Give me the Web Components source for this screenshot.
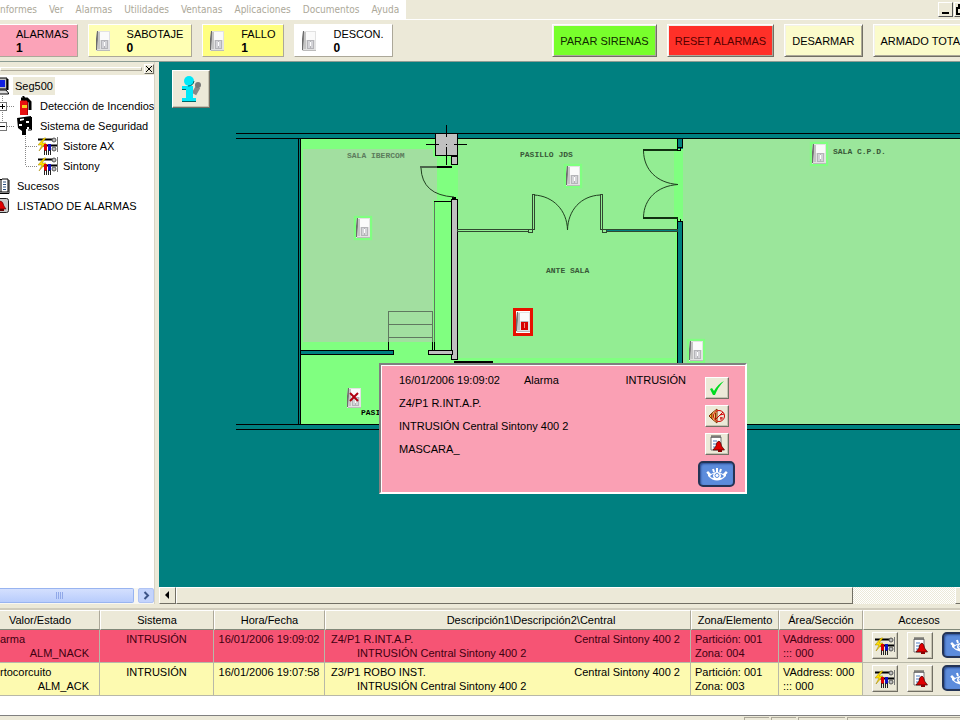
<!DOCTYPE html>
<html lang="es">
<head>
<meta charset="utf-8">
<title>Seg500</title>
<style>
    html, body {
        margin: 0;
        height: 100%;
        overflow: hidden;
    }
    body {
        font: 11px/14px "Liberation Sans", Arial, sans-serif;
        color: #000;
        background: #ece9d8;
    }
</style>
</head>
<body>
<seg-app></seg-app>

<script>
const ICONS = {
    pir: `<svg width="14" height="20" viewBox="0 0 14 20">
        <path d="M1 0H14V20H0V8Z" fill="#e2e2e2"/><path d="M1 0H2V9L1 19H0V8Z" fill="#6c6c6c"/>
        <path d="M2 1H4V18H1.500Z" fill="#c4c4c4"/><path d="M4 1H13V9H4Z" fill="#fafafa"/>
        <path d="M5 9H12V18H5Z" fill="#b4b4b8"/><path d="M6 10H8V17H6ZM9 10H11V17H9Z" fill="#d4d4d8"/>
        <path d="M8 11H9V15H8Z" fill="#fff"/><path d="M1 19.500H14" stroke="#bbb"/></svg>`,
    computer: `<svg width="17" height="18" viewBox="0 0 17 18">
        <path d="M2 1H15V12H2Z" fill="#c0c0c0" stroke="#000"/><path d="M4 3H13V10H4Z" fill="#1020e0"/>
        <path d="M1 13H14L16.500 16V17H1Z" fill="#ddd" stroke="#000"/><path d="M15.500 2V13" stroke="#000" stroke-width="2"/></svg>`,
    extinguisher: `<svg width="18" height="20" viewBox="0 0 18 20">
        <path d="M4 5H12V19H4Z" fill="#e81010"/><path d="M4 5Q8 1 12 5V6H4Z" fill="#e81010"/>
        <path d="M6 9H11V12H6Z" fill="#f8d020"/><path d="M11.500 5V19" stroke="#a00" />
        <path d="M5 3H11L14 6V14" fill="none" stroke="#000" stroke-width="3"/><path d="M7 0L9 4" stroke="#000" stroke-width="2"/></svg>`,
    camera: `<svg width="18" height="20" viewBox="0 0 18 20">
        <path d="M1 2L15 0V13H10V19H6V15L2 12Z" fill="#000"/><path d="M4 3L8 2.500V4L4 5Z" fill="#fff"/>
        <path d="M3 8H6V10H3ZM10 5H13V7H10ZM11 11H13V13H11Z" fill="#fff"/><path d="M15.500 1V14H12" fill="none" stroke="#000"/></svg>`,
    devices: `<svg width="20" height="18" viewBox="0 0 20 18">
        <path d="M0 2.500H17M4 8.500H19" stroke="#000" stroke-width="2"/><path d="M19.500 0V15" stroke="#777"/>
        <path d="M6 1L0 8H4L1 14L8 6H4L8 1Z" fill="#ffe000" stroke="#a08000" stroke-width=".5"/>
        <circle cx="16" cy="3" r="2" fill="#bbb" stroke="#555"/><circle cx="16" cy="12" r="2" fill="#bbb" stroke="#555"/>
        <path d="M6 7H9V14H6Z" fill="#d00"/><path d="M10 7H13V14H10Z" fill="#1010c0"/>
        <path d="M6.500 13V18M8.500 13V18M10.500 13V18M12.500 13V18" stroke="#222"/></svg>`,
    book: `<svg width="18" height="16" viewBox="0 0 18 16">
        <path d="M1 1H8L9 2L10 1H16V14H1Z" fill="#fff" stroke="#000"/><path d="M9 2V14M17 2V15.500H2" stroke="#000" fill="none"/>
        <path d="M11 4H14M11 6.500H14M11 9H14M11 11.500H14M3 4H7M3 7H7M3 10H7" stroke="#2a5080"/></svg>`,
    bell: `<svg width="18" height="16" viewBox="0 0 18 16">
        <rect x=".5" y=".5" width="16" height="14" rx="2" fill="#c8c8c8" stroke="#222"/>
        <path d="M8 3Q11 3 12 8L14 11H3L5 8Q5 3 8 3Z" fill="#e00000" stroke="#300" stroke-width=".5"/><path d="M8 11H12V13H8Z" fill="#600"/></svg>`,
    info: `<svg width="22" height="28" viewBox="0 0 22 28">
        <path d="M18 12L14 19" stroke="#888" stroke-width="5"/><circle cx="18" cy="10" r="3" fill="#777"/>
        <circle cx="9" cy="6" r="5" fill="#00e8f8"/><path d="M2 11H13V23H16V26H2V23H6V14H2Z" fill="#00e8f8"/>
        <path d="M2 26.500H16M14 6Q13 11 8 11M2 14.500H6" fill="none" stroke="#066"/></svg>`,
    check: `<svg width="16" height="16" viewBox="0 0 16 16">
        <path d="M1 9L3 8L5 11Q9 4 15 1Q9 7 6 15H4Z" fill="#00dc20"/></svg>`,
    siren: `<svg width="18" height="16" viewBox="0 0 18 16">
        <path d="M1 8L4 5V11Z" fill="#ffb020" stroke="#803000"/><path d="M4 5L9 1V15L4 11Z" fill="#ffe080" stroke="#803000"/>
        <path d="M7.500 5V11" stroke="#803000"/>
        <circle cx="11" cy="8" r="5.500" fill="none" stroke="#d00000"/><path d="M7 12L15 4M12 7L16 6M12 10H15M13 12V9" stroke="#d00000"/></svg>`,
    note: `<svg width="16" height="18" viewBox="0 0 16 18">
        <path d="M2 2H12V15H2Z" fill="#fff" stroke="#777"/><path d="M3 0V3M5 0V3M7 0V3M9 0V3M11 0V3" stroke="#444"/>
        <path d="M4 6H8M4 9H7M4 12H6" stroke="#4a7ac0"/>
        <path d="M10 6Q12 7 12.500 11L15.500 15H4L7 11Q7 7 10 6Z" fill="#e00000" stroke="#400" stroke-width=".7"/><path d="M9 15H13V17H9Z" fill="#800"/></svg>`,
    eye: `<svg width="22" height="13" viewBox="0 0 22 13">
        <path d="M2 3L5 6Q11 2 17 6L20 3L20 8Q11 17 2 8Z" fill="#fff"/>
        <path d="M1 4L4 7M7 1L8 4M11 0V4M15 1L14 4M21 4L18 7" stroke="#fff" stroke-width="2"/>
        <path d="M4 8Q6 6 8 5.500Q6 8 8 10Q5 10 4 8ZM18 8Q16 6 14 5.500Q16 8 14 10Q17 10 18 8Z" fill="#5c8cdc"/>
        <circle cx="11" cy="7.500" r="2" fill="none" stroke="#5c8cdc"/></svg>`,
};

// Adds a shadow root to every element and fills it once
class SegElement extends HTMLElement {
    connectedCallback() {
        if (this.shadowRoot) return;
        this.attachShadow({ mode: 'open' });
        this.shadowRoot.innerHTML = this.render();
    }
    attr(name, fallback = '') {
        return this.getAttribute(name) || fallback;
    }
}

class SegIcon extends SegElement {
    render() {
        return `
            <style>
                :host { display: inline-flex; flex: none; }
                svg { display: block; }
            </style>
            ${ICONS[this.attr('name')]}
        `;
    }
}

class IconButton extends SegElement {
    render() {
        return `
            <style>
                :host { display: block; flex: none; }
                button {
                    display: flex;
                    align-items: center;
                    justify-content: center;
                    width: var(--w, 24px);
                    height: var(--h, 22px);
                    padding: 0;
                    border: 1px solid;
                    border-color: #fff #716f64 #716f64 #fff;
                    box-shadow: inset -1px -1px #c5c2b2;
                    background: #ece9d8;
                }
                :host([blue]) button {
                    width: 37px;
                    height: 26px;
                    border: 2px solid #243456;
                    border-radius: 5px;
                    box-shadow: inset 1px 1px 2px #2c4c90;
                    background: #5c8cdc;
                }
            </style>
            <button type="button" aria-label="${this.attr('label')}"><seg-icon name="${this.attr('icon')}"></seg-icon></button>
        `;
    }
}

class MenuBar extends SegElement {
    render() {
        const items = ['nformes', 'Ver', 'Alarmas', 'Utilidades', 'Ventanas', 'Aplicaciones', 'Documentos', 'Ayuda'];
        return `
            <style>
                :host {
                    display: flex;
                    justify-content: space-between;
                    height: 20px;
                    box-sizing: border-box;
                    overflow: hidden;
                    border-bottom: 1px solid #fff;
                }
                nav {
                    display: flex;
                    gap: 12px;
                    padding-right: 7px;
                    background: #fff;
                    height: 19px;
                }
                nav button {
                    padding: 0;
                    border: 0;
                    background: none;
                    color: #aca899;
                    font: 10px/18px "DejaVu Sans Condensed", "DejaVu Sans", sans-serif;
                }
                .win { display: flex; gap: 1px; padding-top: 2px; margin-right: -9px; }
                .win button {
                    display: flex;
                    width: 15px;
                    height: 15px;
                    padding: 0;
                    border: 1px solid;
                    border-color: #fff #555 #555 #fff;
                    background: #ece9d8;
                }
            </style>
            <nav>${items.map(i => `<button type="button">${i}</button>`).join('')}</nav>
            <div class="win">
                <button type="button" aria-label="Minimizar"><svg width="13" height="13"><path d="M3 10H10" stroke="#000" stroke-width="2"/></svg></button>
                <button type="button" aria-label="Restaurar"><svg width="13" height="13"><path d="M4 5V2H11V8H8M2 5H8V11H2Z" fill="none" stroke="#000" stroke-width="2"/></svg></button>
            </div>
        `;
    }
}

class StatusTile extends SegElement {
    render() {
        return `
            <style>
                :host {
                    display: flex;
                    flex: none;
                    align-items: center;
                    gap: 17px;
                    box-sizing: border-box;
                    height: 33px;
                    padding: 0 8px 0 7px;
                    border: 1px solid;
                    border-color: #fff #aca899 #aca899 #fff;
                    background: var(--tile, #fff);
                }
                .text { display: flex; flex-direction: column; }
                b { font-size: 12px; }
            </style>
            <seg-icon name="pir"></seg-icon>
            <div class="text"><slot></slot><b>${this.attr('count', '0')}</b></div>
        `;
    }
}

class ToolButton extends SegElement {
    render() {
        return `
            <style>
                :host { display: block; flex: none; }
                button {
                    height: 33px;
                    padding: 0 7px;
                    border: 1px solid;
                    border-color: #fff #716f64 #716f64 #fff;
                    box-shadow: inset 1px 1px #f4f2e8, inset -1px -1px #aca899;
                    background: var(--face, #fbfbcb);
                    color: inherit;
                    font: inherit;
                    white-space: nowrap;
                }
            </style>
            <button type="button"><slot></slot></button>
        `;
    }
}

class ToolBar extends SegElement {
    render() {
        return `
            <style>
                :host {
                    display: flex;
                    justify-content: space-between;
                    box-sizing: border-box;
                    height: 42px;
                    padding-top: 4px;
                    overflow: hidden;
                    border-bottom: 1px solid #8c9c94;
                }
                div { display: flex; gap: 10px; }
                .tiles { margin-left: -23px; }
                .actions { margin-right: -8px; }
            </style>
            <div class="tiles">
                <status-tile count="1" style="--tile:#fba3b8">ALARMAS</status-tile>
                <status-tile count="0" style="--tile:#ffffb4">SABOTAJE</status-tile>
                <status-tile count="1" style="--tile:#ffff80">FALLO</status-tile>
                <status-tile count="0">DESCON.</status-tile>
            </div>
            <div class="actions">
                <tool-button style="--face:#78ff2c;color:#102800">PARAR SIRENAS</tool-button>
                <tool-button style="--face:#ff3028;color:#500">RESET ALARMAS</tool-button>
                <tool-button>DESARMAR</tool-button>
                <tool-button>ARMADO TOTA</tool-button>
            </div>
        `;
    }
}

class TreeRow extends SegElement {
    // gutter: branch lines and the expander box
    gutter() {
        const dots = 'stroke="#888" stroke-dasharray="1 1"';
        const kind = this.attr('kind');
        if (kind === 'plus' || kind === 'minus') {
            const plus = kind === 'plus';
            return `<svg width="24" height="20"><path d="M10.500 0V${plus ? 20 : 10}M15 10.500H22" ${dots}/>
                <rect x="6.500" y="6.500" width="8" height="8" fill="#fff" stroke="#777"/>
                <path d="M8 10.500H13${plus ? 'M10.500 8V13' : ''}" stroke="#000"/></svg>`;
        }
        if (kind === 'child' || kind === 'last') {
            return `<svg width="46" height="20"><path d="M33.500 0V${kind === 'last' ? 10 : 20}M34 10.500H46" ${dots}/></svg>`;
        }
        return '';
    }
    render() {
        return `
            <style>
                :host { display: flex; align-items: center; height: 20px; white-space: nowrap; }
                svg { flex: none; }
                .label { padding: 2px; margin-left: 4px; }
                :host([kind=root]) .label { background: #ece9d8; }
                :host([kind=child]) .label, :host([kind=last]) .label { margin-left: 3px; }
                :host([kind=leaf]) .label { margin-left: 5px; }
            </style>
            ${this.gutter()}<seg-icon name="${this.attr('icon')}"></seg-icon><span class="label"><slot></slot></span>
        `;
    }
}

class TreePanel extends SegElement {
    render() {
        return `
            <style>
                :host {
                    display: flex;
                    flex-direction: column;
                    width: 155px;
                    flex: none;
                    overflow: hidden;
                    box-sizing: border-box;
                    border-right: 1px solid #d8d4c4;
                }
                .grip { display: flex; align-items: center; gap: 2px; height: 13px; }
                .grip i { flex: 1; height: 2px; border: 1px solid; border-color: #fff #aca899 #aca899 #fff; }
                .grip button {
                    display: flex;
                    width: 10px;
                    height: 10px;
                    padding: 0;
                    border: 1px solid;
                    border-color: #fff #716f64 #716f64 #fff;
                    background: #ece9d8;
                }
                .tree { flex: 1; padding-top: 1px; background: #fff; overflow: hidden; }
                .rows { margin-left: -8px; }
                .bar { display: flex; gap: 4px; height: 15px; padding-bottom: 1px; background: #f8f7f2; }
                .bar span {
                    flex: 1;
                    display: flex;
                    align-items: center;
                    justify-content: center;
                    box-sizing: border-box;
                    border: 1px solid #98b4f0;
                    border-left: 0;
                    border-radius: 0 2px 2px 0;
                    padding-right: 14px;
                    background: linear-gradient(#d4e0fe, #b8ccfc);
                }
                .bar button {
                    display: flex;
                    align-items: center;
                    justify-content: center;
                    width: 16px;
                    height: 15px;
                    padding: 0;
                    border: 1px solid #b0c4f4;
                    border-radius: 2px;
                    background: #c4d4fc;
                }
            </style>
            <div class="grip"><i></i><button type="button" aria-label="Cerrar"><svg width="8" height="8"><path d="M1 1L7 7M7 1L1 7" stroke="#000"/></svg></button></div>
            <div class="tree"><div class="rows">
                <tree-row kind="root" icon="computer">Seg500</tree-row>
                <tree-row kind="plus" icon="extinguisher">Detección de Incendios</tree-row>
                <tree-row kind="minus" icon="camera">Sistema de Seguridad</tree-row>
                <tree-row kind="child" icon="devices">Sistore AX</tree-row>
                <tree-row kind="last" icon="devices">Sintony</tree-row>
                <tree-row kind="leaf" icon="book">Sucesos</tree-row>
                <tree-row kind="leaf" icon="bell">LISTADO DE ALARMAS</tree-row>
            </div></div>
            <div class="bar">
                <span><svg width="8" height="7"><path d="M.5 0V7M2.500 0V7M4.500 0V7M6.500 0V7" stroke="#90a8e8"/></svg></span>
                <button type="button" aria-label="Derecha"><svg width="7" height="9"><path d="M1.500 1L5 4.500L1.500 8" fill="none" stroke="#3c5488" stroke-width="2"/></svg></button>
            </div>
        `;
    }
}

class PirSensor extends SegElement {
    render() {
        const state = this.attr('state');
        return `
            <style>
                :host { position: absolute; display: block; box-shadow: 0 0 1px 2px #80ff80; }
                :host([state=alarm]) { box-shadow: none; border: 3px solid #e81000; background: #fff; padding: 1px 0; }
                svg.mark { position: absolute; inset: 0; }
                seg-icon { display: flex; }
            </style>
            <seg-icon name="pir"></seg-icon>
            ${state === 'off' ? '<svg class="mark" width="14" height="20"><path d="M3 5L11 13M11 5L3 13" stroke="#b00010" stroke-width="2"/></svg>' : ''}
            ${state === 'alarm' ? '<svg class="mark" width="14" height="22"><path d="M5 11H12V19H5Z" fill="#d80000"/><path d="M8.500 12V17" stroke="#f09080"/></svg>' : ''}
        `;
    }
}

class AlarmPopup extends SegElement {
    render() {
        return `
            <style>
                :host {
                    display: flex;
                    justify-content: space-between;
                    box-sizing: border-box;
                    width: 368px;
                    padding: 7px 10px 5px 18px;
                    border: 2px solid;
                    border-color: #808080 #fff #fff #808080;
                    box-shadow: inset 1px 1px #fff;
                    background: #faa0b4;
                    line-height: 17px;
                }
                .text { display: flex; flex-direction: column; gap: 6px; width: 287px; }
                .head { display: flex; }
                .head span:nth-child(2) { padding-left: 24px; flex: 1; }
                .buttons { display: flex; flex-direction: column; align-items: center; gap: 6px; padding-top: 5px; }
            </style>
            <div class="text">
                <div class="head"><span>16/01/2006 19:09:02</span><span>Alarma</span><span>INTRUSIÓN</span></div>
                <div>Z4/P1 R.INT.A.P.</div>
                <div>INTRUSIÓN Central Sintony 400 2</div>
                <div>MASCARA_</div>
            </div>
            <div class="buttons">
                <icon-button icon="check" label="Aceptar"></icon-button>
                <icon-button icon="siren" label="Silenciar"></icon-button>
                <icon-button icon="note" label="Sucesos"></icon-button>
                <icon-button blue icon="eye" label="Ver"></icon-button>
            </div>
        `;
    }
}

class FloorPlan extends SegElement {
    render() {
        return `
            <style>
                :host { display: flex; flex-direction: column; flex: 1; min-width: 0; }
                .canvas { position: relative; flex: 1; overflow: hidden; background: #008080; }
                .canvas > svg { position: absolute; inset: 0; width: 100%; height: 100%; }
                text { font: bold 8px "Liberation Mono", monospace; fill: #385838; }
                icon-button, alarm-popup { position: absolute; }
                .info { left: 13px; top: 8px; --w: 38px; --h: 38px; }
                alarm-popup { left: 220px; top: 301px; }
                .bar {
                    display: flex;
                    height: 17px;
                    background: repeating-conic-gradient(#fff 0 25%, #ece9d8 0 50%) 0 0 / 2px 2px;
                }
                .bar button, .bar span {
                    box-sizing: border-box;
                    width: 17px;
                    padding: 0;
                    border: 1px solid;
                    border-color: #fff #716f64 #716f64 #fff;
                    background: #ece9d8;
                }
                .bar span { flex: 1; margin-right: 102px; }
                .bar button:last-child { margin-right: -12px; }
            </style>
            <div class="canvas">
                <svg shape-rendering="crispEdges">
                    <!-- floors -->
                    <rect x="142" y="77" width="376" height="286" fill="#80ff80"/>
                    <rect x="144" y="87" width="130" height="193" fill="#a2dfa0"/>
                    <rect x="274" y="95" width="4" height="43" fill="#a2dfa0"/>
                    <rect x="299" y="77" width="217" height="281" fill="#93ed93"/>
                    <rect x="299" y="296" width="219" height="5" fill="#80ff80"/>
                    <rect x="515" y="87" width="9" height="73" fill="#80ff80"/>
                    <rect x="524" y="77" width="100%" height="285" fill="#9be69b"/>
                    <!-- outer walls -->
                    <g fill="none" stroke="#000">
                        <path d="M77 71.500H4000M77 76.500H4000M77 362.500H4000M77 367.500H4000"/>
                        <path d="M139.500 77V362M141.500 77V362"/>
                    </g>
                    <!-- right partition -->
                    <g fill="#008080" stroke="#000">
                        <path d="M518.500 76.500H523.500V85.500H518.500ZM518.500 159.500H523.500V310H518.500Z"/>
                        <path d="M141.500 288.500H234.500V292.500H141.500Z"/>
                    </g>
                    <!-- middle partition and column -->
                    <g fill="#c0c0c0" stroke="#000">
                        <path d="M292.500 94.500H298.500V102.500H292.500ZM292.500 137.500H298.500V297.500H292.500Z"/>
                        <path d="M269.500 288.500H293.500V292.500H269.500Z"/>
                        <rect x="276.500" y="71.500" width="22" height="22"/>
                        <path d="M287.500 63V75M287.500 85V103M267 82.500H280M295 82.500H308M287 82.500H288" fill="none"/>
                    </g>
                    <path d="M278 105H293M293 136H297M295 300H334" stroke="#000" stroke-width="2"/>
                    <path d="M261 105H278" stroke="#4c644c" stroke-width="2"/>
                    <!-- stairs -->
                    <path d="M229.500 249.500H273.500M229.500 262.500H273.500M229.500 275.500H273.500M229.500 249V280M273.500 249V280M275.500 139V280" fill="none" stroke="#607860"/>
                    <path d="M229.500 280V288M273.500 280V288M275.500 280V288M275 139.500H293" stroke="#000"/>
                    <!-- hall front -->
                    <g fill="#93ed93" stroke="#304830">
                        <path d="M298.500 167.500H373V169.500H298.500Z"/><path d="M373.500 132.500H375.500V167.500H373.500ZM441.500 132.500H443.500V167.500H441.500Z"/>
                        <path d="M443.500 167.500H518V169.500H443.500Z" fill="#008080"/>
                        <path d="M369.500 167.500H373.500V170.500H369.500ZM443.500 167.500H447.500V170.500H443.500Z"/>
                    </g>
                    <path d="M484 88H519M484 156H519" stroke="#103010" stroke-width="2"/>
                    <path d="M518.500 86V88H521V86M518.500 157V159H521V157" fill="none" stroke="#000"/>
                    <g fill="none" stroke="#204020" shape-rendering="auto">
                        <path d="M262 106Q263 133 295 135"/>
                        <path d="M375 133C394 134 408 148 408.500 168C409 148 422 134 441 133"/>
                        <path d="M484.500 89C485 108 498 121 519 122.500C498 124 485 137 484.500 155"/>
                    </g>
                    <text x="188" y="96" style="fill:#5c7c5c">SALA IBERCOM</text>
                    <text x="361" y="95">PASILLO JDS</text>
                    <text x="674" y="92">SALA C.P.D.</text>
                    <text x="387" y="211">ANTE SALA</text>
                    <text x="202" y="353" style="fill:#000">PASI</text>
                </svg>
                <pir-sensor style="left:197px;top:156px"></pir-sensor>
                <pir-sensor style="left:407px;top:104px"></pir-sensor>
                <pir-sensor style="left:653px;top:82px"></pir-sensor>
                <pir-sensor style="left:530px;top:279px"></pir-sensor>
                <pir-sensor style="left:188px;top:326px" state="off"></pir-sensor>
                <pir-sensor style="left:354px;top:246px" state="alarm"></pir-sensor>
                <icon-button class="info" icon="info" label="Información"></icon-button>
                <alarm-popup></alarm-popup>
            </div>
            <div class="bar">
                <button type="button" aria-label="Izquierda"><svg width="15" height="13"><path d="M5 7L9 3V11Z" fill="#000"/></svg></button>
                <span></span>
                <button type="button" aria-label="Derecha"></button>
            </div>
        `;
    }
}

class EventGrid extends SegElement {
    row(e) {
        return `
            <tr class="${e.cls}">
                <td><div>${e.value}</div><div class="right">${e.state}</div></td>
                <td class="center">INTRUSIÓN</td>
                <td class="center">${e.time}</td>
                <td><div class="split"><span>${e.desc}</span><span>Central Sintony 400 2</span></div><div class="indent">INTRUSIÓN Central Sintony 400 2</div></td>
                <td><div>Partición: 001</div><div>Zona: ${e.zone}</div></td>
                <td><div>VAddress: 000</div><div>::: 000</div></td>
                <td class="access"><div class="buttons">
                    <icon-button icon="devices" label="Dispositivos"></icon-button>
                    <icon-button icon="note" label="Sucesos"></icon-button>
                    <icon-button blue icon="eye" label="Ver"></icon-button>
                </div></td>
            </tr>
        `;
    }
    render() {
        const events = [
            { cls: 'nack', value: 'arma', state: 'ALM_NACK', time: '16/01/2006 19:09:02', desc: 'Z4/P1 R.INT.A.P.', zone: '004' },
            { cls: 'ack', value: 'rtocorcuito', state: 'ALM_ACK', time: '16/01/2006 19:07:58', desc: 'Z3/P1 ROBO INST.', zone: '003' },
        ];
        return `
            <style>
                :host { display: block; overflow: hidden; background: #fff; padding-bottom: 19px; border-top: 2px solid #d0ccbc; }
                table { table-layout: fixed; width: calc(100% + 35px); margin-left: -20px; border-collapse: separate; border-spacing: 0; }
                th {
                    height: 20px;
                    box-sizing: border-box;
                    padding: 0;
                    border: 1px solid;
                    border-color: #fff #aca899 #808878 #fff;
                    background: #ece9d8;
                    font-weight: normal;
                }
                th:nth-child(4) { padding-left: 46px; }
                td {
                    height: 33px;
                    box-sizing: border-box;
                    padding: 2px 4px;
                    vertical-align: top;
                    white-space: nowrap;
                    border-right: 1px solid #b8b8a8;
                    border-bottom: 1px solid #b8b8a8;
                }
                td:first-child { padding-left: 20px; padding-right: 10px; }
                .nack { background: #f65474; color: #400010; }
                .ack { background: #fdfab0; }
                .right { text-align: right; }
                .center { text-align: center; }
                td:nth-child(4) { padding: 2px 10px 2px 6px; }
                .split { display: flex; justify-content: space-between; }
                .indent { padding-left: 26px; }
                td.access { padding: 2px 0 0 9px; background: #ece9d8; }
                .buttons { display: flex; gap: 9px; --w: 26px; --h: 27px; }
            </style>
            <table>
                <colgroup>
                    <col style="width:120px"><col style="width:114px"><col style="width:111px"><col>
                    <col style="width:88px"><col style="width:84px"><col style="width:112px">
                </colgroup>
                <thead><tr>
                    <th>Valor/Estado</th><th>Sistema</th><th>Hora/Fecha</th><th>Descripción1\\Descripción2\\Central</th>
                    <th>Zona/Elemento</th><th>Área/Sección</th><th>Accesos</th>
                </tr></thead>
                <tbody>${events.map(e => this.row(e)).join('')}</tbody>
            </table>
        `;
    }
}

class SegApp extends SegElement {
    render() {
        return `
            <style>
                :host { display: flex; flex-direction: column; height: 100vh; overflow: hidden; }
                menu-bar, tool-bar, event-grid { flex: none; }
                main { display: flex; flex: 1; min-height: 0; gap: 4px; padding-bottom: 4px; }
                footer {
                    display: flex;
                    justify-content: flex-end;
                    gap: 2px;
                    height: 3px;
                    padding: 1px 0 0;
                    border-top: 1px solid #808080;
                }
                footer i { width: 24px; border-top: 1px solid #aca899; border-left: 1px solid #aca899; }
                footer i:nth-child(3) { width: 46px; }
                footer i:last-child { width: 112px; }
            </style>
            <menu-bar></menu-bar>
            <tool-bar></tool-bar>
            <main><tree-panel></tree-panel><floor-plan></floor-plan></main>
            <event-grid></event-grid>
            <footer><i></i><i></i><i></i><i></i></footer>
        `;
    }
}

customElements.define('seg-icon', SegIcon);
customElements.define('icon-button', IconButton);
customElements.define('menu-bar', MenuBar);
customElements.define('status-tile', StatusTile);
customElements.define('tool-button', ToolButton);
customElements.define('tool-bar', ToolBar);
customElements.define('tree-row', TreeRow);
customElements.define('tree-panel', TreePanel);
customElements.define('pir-sensor', PirSensor);
customElements.define('alarm-popup', AlarmPopup);
customElements.define('floor-plan', FloorPlan);
customElements.define('event-grid', EventGrid);
customElements.define('seg-app', SegApp);
</script>
</body>
</html>
